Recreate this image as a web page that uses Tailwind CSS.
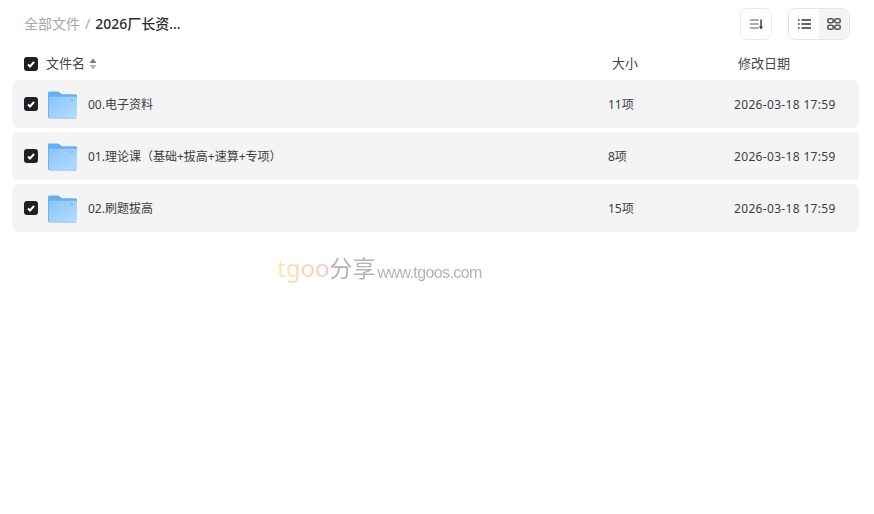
<!DOCTYPE html>
<html lang="zh-CN">
<head>
<meta charset="UTF-8">
<title>全部文件</title>
<script src="https://cdn.jsdelivr.net/npm/@tailwindcss/browser@4"></script>
</head>
<body class="bg-white font-['Noto_Sans','Noto_Sans_CJK_SC',sans-serif]">
<div class="relative w-[874px] h-[514px] overflow-hidden">

  <!-- shared gradient for the folder icons -->
  <svg width="0" height="0" class="absolute">
    <defs>
      <linearGradient id="folderBody" x1="0" y1="0" x2="1" y2="1">
        <stop offset="0" stop-color="#8ac5fa"/>
        <stop offset="1" stop-color="#b4dbff"/>
      </linearGradient>
    </defs>
  </svg>

  <!-- breadcrumb + view buttons -->
  <div class="flex items-center h-12 pl-6 pr-6">
    <a class="text-sm text-[#a8a6a8]">全部文件</a>
    <span class="ml-[5px] mr-[5px] text-sm text-[#a8a6a8]">/</span>
    <span class="text-sm font-medium text-[#2a2b33]">2026厂长资...</span>
    <div class="ml-auto flex gap-4">
      <button class="w-8 h-8 flex items-center justify-center rounded-lg border border-[#e8e8e8]">
        <svg width="13" height="11" viewBox="0 0 13 11" fill="none" stroke="#55565e" stroke-width="1.200">
          <path d="M0 1H8.500M0 5H8.500M0 9H8.500"/>
          <path d="M11 0.500V8" stroke="#33343c" stroke-width="1.400"/>
          <path d="M8.800 7.500H13L11 10.500Z" fill="#33343c" stroke="none"/>
        </svg>
      </button>
      <div class="w-[62px] h-8 flex rounded-lg border border-[#e4e4e4] overflow-hidden">
        <div class="w-[30px] flex items-center justify-center bg-white rounded-r-lg">
          <svg width="13" height="10" viewBox="0 0 13 10" fill="none" stroke="#33343c" stroke-width="1.400">
            <path d="M0 1H1.600M3.400 1H13M0 5H1.600M3.400 5H13M0 9H1.600M3.400 9H13"/>
          </svg>
        </div>
        <div class="flex-1 flex items-center justify-center bg-[#f4f4f4]">
          <svg width="14" height="12" viewBox="0 0 14 12" fill="none" stroke="#55565e" stroke-width="1.600">
            <rect x="0.800" y="0.800" width="5.400" height="4" rx="1.500"/>
            <rect x="7.800" y="0.800" width="5.400" height="4" rx="1.500"/>
            <rect x="0.800" y="7.200" width="5.400" height="4" rx="1.500"/>
            <rect x="7.800" y="7.200" width="5.400" height="4" rx="1.500"/>
          </svg>
        </div>
      </div>
    </div>
  </div>

  <!-- column header -->
  <div class="flex items-center h-8 pl-6 text-[13px] text-[#44454d]">
    <span class="w-[14px] h-[14px] rounded-[3px] bg-[#1f2027] flex items-center justify-center">
      <svg width="8" height="7" viewBox="0 0 8 7" fill="none" stroke="#fff" stroke-width="2"><path d="M1 3.500L3 5.500L7 1"/></svg>
    </span>
    <span class="ml-2">文件名</span>
    <svg class="ml-1" width="8" height="12" viewBox="0 0 8 12"><path d="M4 0.500L7.500 5H0.500Z" fill="#77787e"/><path d="M4 11.500L7.500 7H0.500Z" fill="#b4b4b8"/></svg>
    <span class="ml-[515px] w-[126px]">大小</span>
    <span>修改日期</span>
  </div>

  <!-- rows -->
  <div class="flex flex-col gap-1 ml-3 w-[847px]">
    <div class="flex items-center h-12 pl-3 rounded-md bg-[#f4f4f4] text-xs text-[#3c3d45]">
      <span class="w-[14px] h-[14px] rounded-[3px] bg-[#1f2027] flex items-center justify-center shrink-0">
        <svg width="8" height="7" viewBox="0 0 8 7" fill="none" stroke="#fff" stroke-width="2"><path d="M1 3.500L3 5.500L7 1"/></svg>
      </span>
      <svg class="ml-[10px] mt-[2px] shrink-0" width="29" height="28" viewBox="0 0 30 28">
        <path d="M0 1.500A1.500 1.500 0 0 1 1.500 0H10.500L14.500 3H28.500A1.500 1.500 0 0 1 30 4.500V8H0Z" fill="#64b0f2"/>
        <path d="M0 3H1V27H29V28H1.500A1.500 1.500 0 0 1 0 26.500Z" fill="#64b0f2"/>
        <path d="M1 5.500H29A1 1 0 0 1 30 6.500V27A1 1 0 0 1 29 27H1Z" fill="url(#folderBody)"/>
        <rect x="23" y="8" width="3" height="2" fill="#7fbcf3"/>
      </svg>
      <span class="ml-[11px] w-[520px] pt-[2px]">00.电子资料</span>
      <span class="w-[126px] pt-[2px]">11项</span>
      <span class="pt-[2px] tracking-[0.33px]">2026-03-18 17:59</span>
    </div>
    <div class="flex items-center h-12 pl-3 rounded-md bg-[#f4f4f4] text-xs text-[#3c3d45]">
      <span class="w-[14px] h-[14px] rounded-[3px] bg-[#1f2027] flex items-center justify-center shrink-0">
        <svg width="8" height="7" viewBox="0 0 8 7" fill="none" stroke="#fff" stroke-width="2"><path d="M1 3.500L3 5.500L7 1"/></svg>
      </span>
      <svg class="ml-[10px] mt-[2px] shrink-0" width="29" height="28" viewBox="0 0 30 28">
        <path d="M0 1.500A1.500 1.500 0 0 1 1.500 0H10.500L14.500 3H28.500A1.500 1.500 0 0 1 30 4.500V8H0Z" fill="#64b0f2"/>
        <path d="M0 3H1V27H29V28H1.500A1.500 1.500 0 0 1 0 26.500Z" fill="#64b0f2"/>
        <path d="M1 5.500H29A1 1 0 0 1 30 6.500V27A1 1 0 0 1 29 27H1Z" fill="url(#folderBody)"/>
        <rect x="23" y="8" width="3" height="2" fill="#7fbcf3"/>
      </svg>
      <span class="ml-[11px] w-[520px] pt-[2px]">01.理论课（基础+拔高+速算+专项）</span>
      <span class="w-[126px] pt-[2px]">8项</span>
      <span class="pt-[2px] tracking-[0.33px]">2026-03-18 17:59</span>
    </div>
    <div class="flex items-center h-12 pl-3 rounded-md bg-[#f4f4f4] text-xs text-[#3c3d45]">
      <span class="w-[14px] h-[14px] rounded-[3px] bg-[#1f2027] flex items-center justify-center shrink-0">
        <svg width="8" height="7" viewBox="0 0 8 7" fill="none" stroke="#fff" stroke-width="2"><path d="M1 3.500L3 5.500L7 1"/></svg>
      </span>
      <svg class="ml-[10px] mt-[2px] shrink-0" width="29" height="28" viewBox="0 0 30 28">
        <path d="M0 1.500A1.500 1.500 0 0 1 1.500 0H10.500L14.500 3H28.500A1.500 1.500 0 0 1 30 4.500V8H0Z" fill="#64b0f2"/>
        <path d="M0 3H1V27H29V28H1.500A1.500 1.500 0 0 1 0 26.500Z" fill="#64b0f2"/>
        <path d="M1 5.500H29A1 1 0 0 1 30 6.500V27A1 1 0 0 1 29 27H1Z" fill="url(#folderBody)"/>
        <rect x="23" y="8" width="3" height="2" fill="#7fbcf3"/>
      </svg>
      <span class="ml-[11px] w-[520px] pt-[2px]">02.刷题拔高</span>
      <span class="w-[126px] pt-[2px]">15项</span>
      <span class="pt-[2px] tracking-[0.33px]">2026-03-18 17:59</span>
    </div>
  </div>

  <!-- watermark -->
  <div class="absolute left-[277px] top-[252px] flex items-baseline blur-[0.4px] whitespace-nowrap">
    <span class="text-[24px] leading-8 bg-gradient-to-r from-[#fde6a8] to-[#fbc6b8] bg-clip-text text-transparent">tgoo</span>
    <span class="text-[23px] leading-8 text-[#b4b4b4]">分享</span>
    <span class="ml-[2px] translate-y-px font-['Liberation_Sans',sans-serif] text-[16px] leading-8 tracking-[-0.6px] text-[#b4b4b4]">www.tgoos.com</span>
  </div>
</div>
</body>
</html>
